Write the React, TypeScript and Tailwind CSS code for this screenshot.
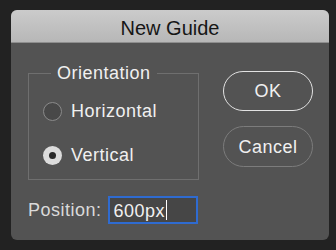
import React from "react";

const font = { fontFamily: '"Liberation Sans", Arial, sans-serif' };

function Radio({ checked }: { checked: boolean }) {
  return checked ? (
    <span className="flex h-[19px] w-[19px] items-center justify-center rounded-full bg-[#dcdcdc]">
      <span className="h-[7px] w-[7px] rounded-full bg-[#2a2a2a]" />
    </span>
  ) : (
    <span className="h-[19px] w-[19px] rounded-full border border-[#8a8a8a] bg-[#484848]" />
  );
}

export default function App() {
  return (
    <div
      className="h-[250px] w-[336px] bg-[#222222] pl-[11px] pt-[10px]"
      style={font}
    >
      <div className="flex h-[230px] w-[318px] flex-col overflow-hidden rounded-[6px] bg-[#535353]">
        <div className="flex h-[33px] items-center justify-center border-b border-[#8e8e8e] bg-gradient-to-b from-[#cbcbcb] to-[#b7b7b7] pt-[3px] text-[20px] text-[#161616]">
          New Guide
        </div>
        <div className="flex flex-1 flex-col pl-[17px] pt-[30px] text-[18px] tracking-[0.5px] text-[#f0f0f0]">
          <div className="flex">
            <div className="relative h-[107px] w-[171px] border border-[#6f6f6f]">
              <span className="absolute left-[22px] top-[-12px] bg-[#535353] px-[6px] text-[18px] leading-[22px]">
                Orientation
              </span>
              <div className="flex flex-col gap-[24px] pl-[14px] pt-[27px]">
                <div className="flex items-center gap-[9px]">
                  <Radio checked={false} />
                  <span className="pt-[1px] leading-[19px]">Horizontal</span>
                </div>
                <div className="flex items-center gap-[9px]">
                  <Radio checked={true} />
                  <span className="pt-[1px] leading-[19px]">Vertical</span>
                </div>
              </div>
            </div>
            <div className="ml-[24px] mt-[-2px] flex flex-col gap-[15px]">
              <div className="flex h-[40px] w-[90px] items-center justify-center rounded-full border-[1.5px] border-[#e2e2e2] pt-[1px]">
                OK
              </div>
              <div className="flex h-[41px] w-[90px] items-center justify-center rounded-full border-[1.5px] border-[#7c7c7c] pt-[1px]">
                Cancel
              </div>
            </div>
          </div>
          <div className="mt-[16px] flex items-center">
            <span className="mr-[6px] pt-[1px] text-[#dadada]">Position:</span>
            <div className="flex h-[28px] w-[90px] items-center border-2 border-[#2f6bd0] bg-[#464646] pl-[4px]">
              <span className="pt-[1px] leading-[20px]">600px</span>
              <span className="ml-[1px] h-[20px] w-[1px] bg-white" />
            </div>
          </div>
        </div>
      </div>
    </div>
  );
}
